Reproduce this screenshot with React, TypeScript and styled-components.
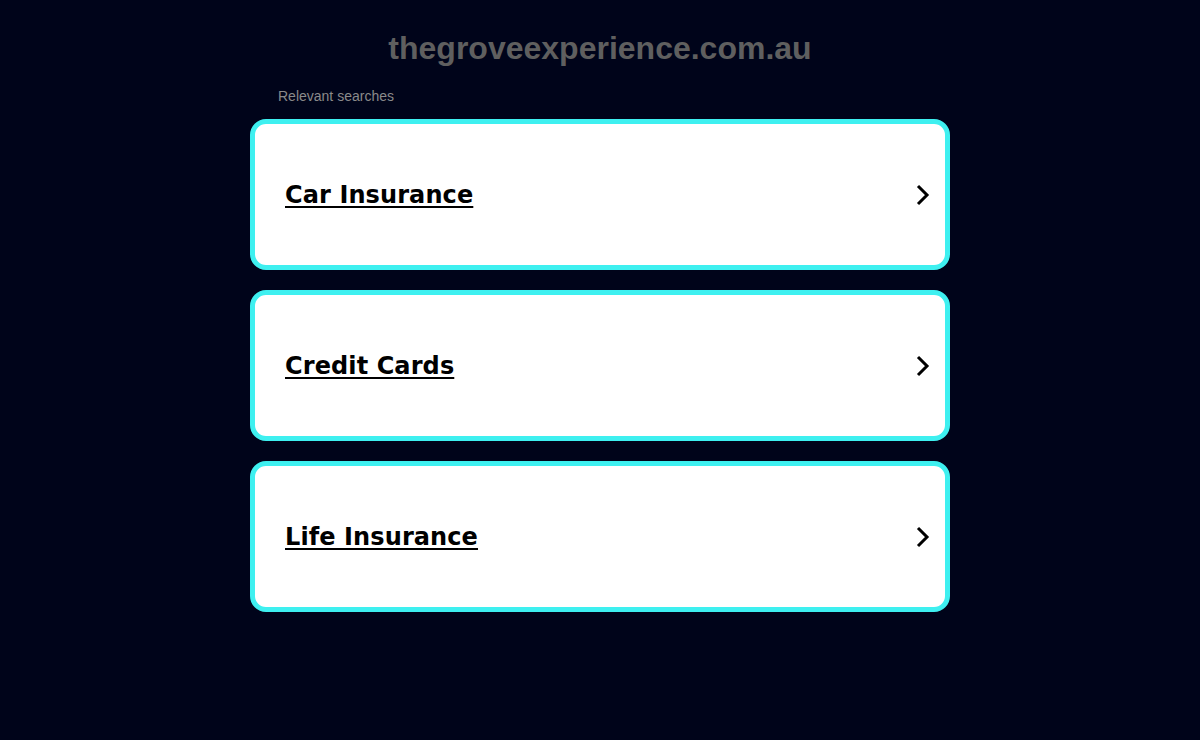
import React from "react";
import styled, { createGlobalStyle } from "styled-components";

const GlobalStyle = createGlobalStyle`
    html, body {
        margin: 0;
        padding: 0;
        background-color: #00041a;
    }
`

const Page = styled.div`
    min-height: 740px;
    background-color: #00041a;
    display: flex;
    flex-direction: column;
    align-items: center;
`

const Domain = styled.h1`
    margin: 29px 0 0 0;
    height: 38px;
    line-height: 38px;
    font-family: "Liberation Sans", Arial, sans-serif;
    font-size: 32px;
    font-weight: bold;
    color: #5f5f5f;
`

const Results = styled.div`
    width: 700px;
    margin-top: 21px;
    display: flex;
    flex-direction: column;
`

const Label = styled.div`
    padding-left: 28px;
    height: 22px;
    font-family: "Liberation Sans", Arial, sans-serif;
    font-size: 14px;
    color: #8a8a8a;
`

const List = styled.div`
    margin-top: 9px;
    display: flex;
    flex-direction: column;
    gap: 20px;
`

const Card = styled.a`
    box-sizing: border-box;
    height: 151px;
    border: 5px solid #3ef0f0;
    border-radius: 16px;
    background: #ffffff;
    display: flex;
    align-items: center;
    justify-content: space-between;
    padding: 0 14px 0 30px;
    text-decoration: none;
    color: #000;
`

const CardText = styled.span`
    font-family: "DejaVu Sans", Verdana, sans-serif;
    font-size: 24px;
    font-weight: bold;
    letter-spacing: 0.1px;
    text-decoration: underline;
    text-decoration-thickness: 2px;
    text-underline-offset: 3px;
    color: #000;
`

const Chevron = () => (
    <svg width="16" height="22" viewBox="0 0 16 22">
        <path d="M3 2 L12 11 L3 20" fill="none" stroke="#000" strokeWidth="3" />
    </svg>
)

const items = ["Car Insurance", "Credit Cards", "Life Insurance"]

const App = () => {
    return (
        <>
            <GlobalStyle />
            <Page>
                <Domain>thegroveexperience.com.au</Domain>
                <Results>
                    <Label>Relevant searches</Label>
                    <List>
                        {items.map((item) => (
                            <Card key={item} href="#">
                                <CardText>{item}</CardText>
                                <Chevron />
                            </Card>
                        ))}
                    </List>
                </Results>
            </Page>
        </>
    )
}

export default App;
